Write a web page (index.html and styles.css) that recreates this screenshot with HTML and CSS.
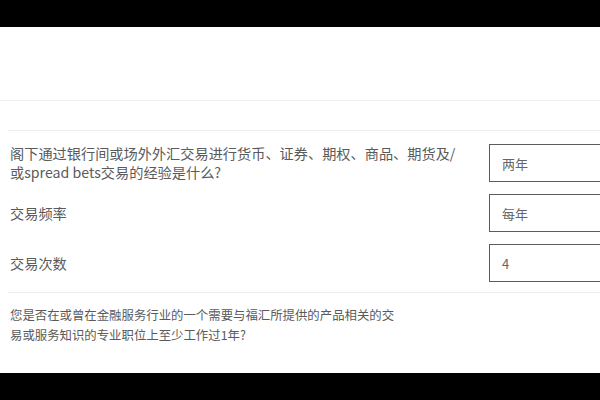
FILE: index.html
```html
<!DOCTYPE html>
<html lang="zh-CN">
<head>
<meta charset="utf-8">
<link rel="stylesheet" href="styles.css">
</head>
<body>
<div class="screen">
  <div class="bar"></div>
  <div class="page">
    <div class="header"></div>
    <div class="form">
      <div class="rows">
        <div class="row">
          <div class="label">阁下通过银行间或场外外汇交易进行货币、证券、期权、商品、期货及/或spread bets交易的经验是什么?</div>
          <div class="field">两年</div>
        </div>
        <div class="row">
          <div class="label">交易频率</div>
          <div class="field">每年</div>
        </div>
        <div class="row">
          <div class="label">交易次数</div>
          <div class="field">4</div>
        </div>
      </div>
      <div class="question">您是否在或曾在金融服务行业的一个需要与福汇所提供的产品相关的交易或服务知识的专业职位上至少工作过1年?</div>
    </div>
  </div>
  <div class="bar"></div>
</div>
</body>
</html>
```
FILE: styles.css
```css
html, body {
  margin: 0;
  padding: 0;
  background: #000;
}
body {
  font-family: "Noto Sans CJK SC", "Noto Sans", sans-serif;
  color: #5a5a5a;
  overflow: hidden;
}
.screen {
  width: 600px;
  height: 400px;
  display: flex;
  flex-direction: column;
  overflow: hidden;
}
.bar {
  height: 27px;
  background: #000;
  flex: none;
}
.page {
  flex: 1;
  background: #fff;
  overflow: hidden;
}
.header {
  height: 73px;
  border-bottom: 1px solid #f0f0f0;
}
.form {
  margin-top: 29px;
  padding-left: 8px;
}
.rows {
  border-top: 1px solid #ececec;
  border-bottom: 1px solid #ececec;
  padding: 13px 0 10px;
  display: flex;
  flex-direction: column;
  gap: 12px;
}
.row {
  display: flex;
  align-items: center;
}
.label {
  width: 450px;
  flex: none;
  padding-left: 2px;
  font-size: 14.2px;
  line-height: 19px;
  margin-right: 29px;
}
.field {
  flex: none;
  width: 140px;
  height: 36px;
  border: 1px solid #5c5c5c;
  box-sizing: content-box;
  padding-left: 12px;
  display: flex;
  align-items: center;
  font-size: 13px;
  color: #666;
}
.question {
  padding: 12px 0 0 2px;
  width: 392px;
  font-size: 12.4px;
  line-height: 20px;
}
```
